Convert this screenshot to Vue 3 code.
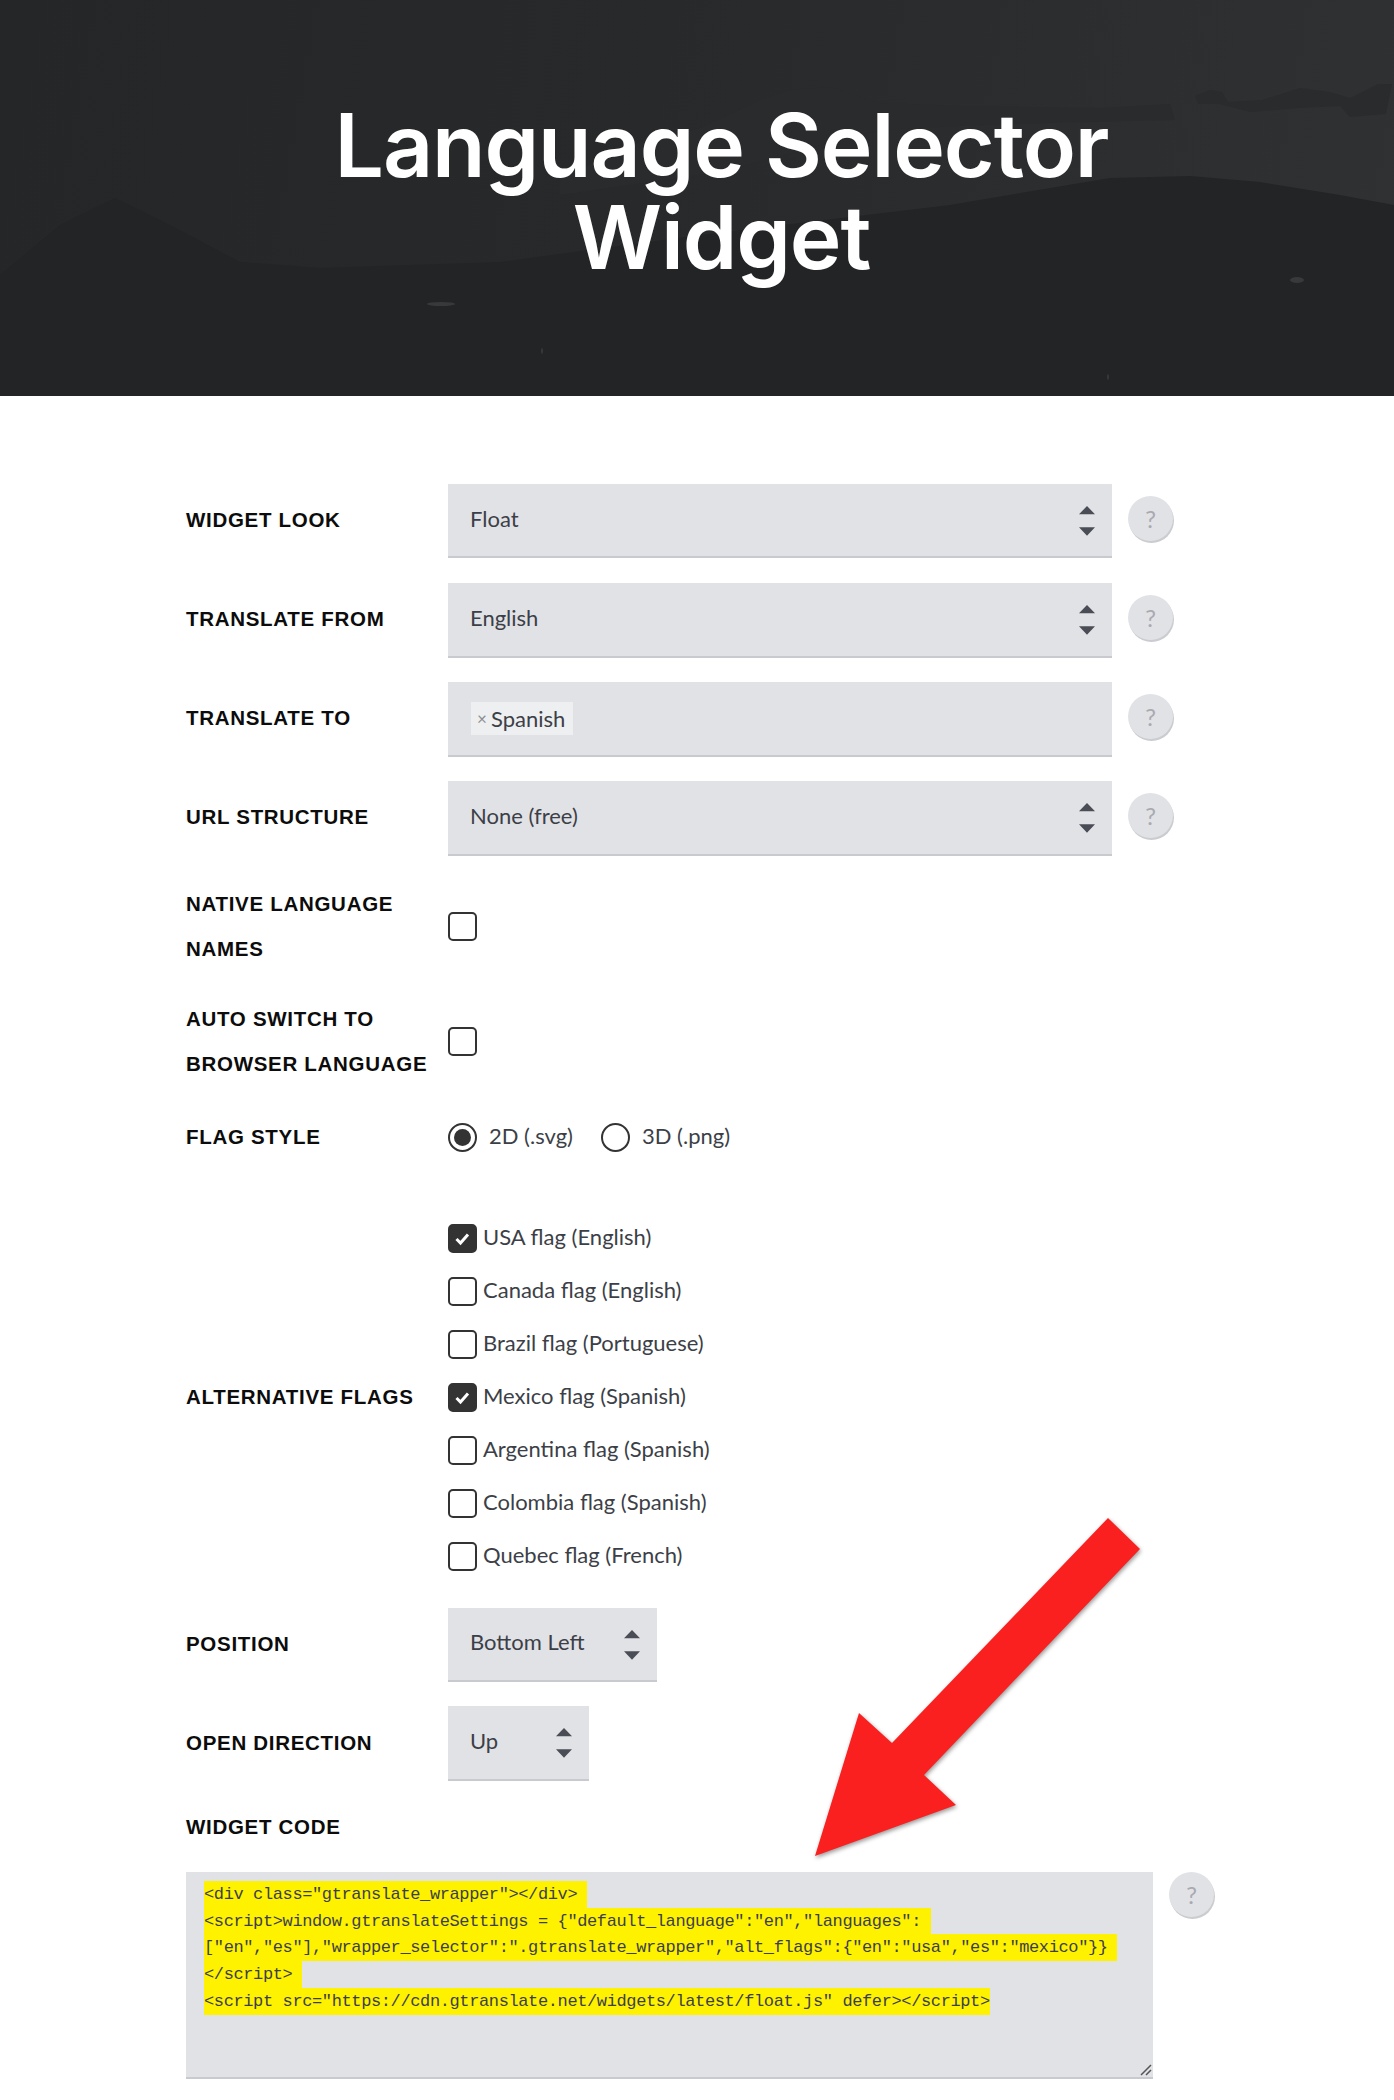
<script setup>
const selects = [
  { label: 'WIDGET LOOK', value: 'Float' },
  { label: 'TRANSLATE FROM', value: 'English' },
  { label: 'TRANSLATE TO', tag: 'Spanish' },
  { label: 'URL STRUCTURE', value: 'None (free)' },
]
const flags = [
  { text: 'USA flag (English)', on: true },
  { text: 'Canada flag (English)', on: false },
  { text: 'Brazil flag (Portuguese)', on: false },
  { text: 'Mexico flag (Spanish)', on: true },
  { text: 'Argentina flag (Spanish)', on: false },
  { text: 'Colombia flag (Spanish)', on: false },
  { text: 'Quebec flag (French)', on: false },
]
const codeLines = [
  '<div class="gtranslate_wrapper"></div>\u00a0',
  '<script>window.gtranslateSettings = {"default_language":"en","languages":\u00a0',
  '["en","es"],"wrapper_selector":".gtranslate_wrapper","alt_flags":{"en":"usa","es":"mexico"}}\u00a0',
  '<\/script>\u00a0',
  '<script src="https://cdn.gtranslate.net/widgets/latest/float.js" defer><\/script>',
]
</script>

<template>
  <div class="page">
    <header class="hero">
      <svg class="hero-bg" viewBox="0 0 1394 396" preserveAspectRatio="none" aria-hidden="true">
        <path class="ridge" d="M560 178L640 142L700 128L760 100L790 90L830 87L880 103L960 106L1100 108L1170 104L1175 120L1000 124L880 130L720 172L560 195Z" />
        <path class="trees" d="M1195 96L1210 90L1222 92L1228 102L1262 100L1300 88L1330 92L1350 98L1378 84L1392 84L1386 114L1350 117L1340 106L1300 108L1250 112L1220 104L1198 104Z" />
        <path class="front" d="M0 275L60 225L115 198L170 225L240 262L320 268L500 262L700 235L950 205L1110 178L1190 176L1260 182L1340 195L1394 205V396H0Z" />
        <ellipse class="speck" cx="441" cy="304" rx="14" ry="2" />
        <ellipse class="speck" cx="1297" cy="280" rx="7" ry="3" />
        <ellipse class="speck" cx="542" cy="351" rx="1" ry="3" />
        <ellipse class="speck" cx="1108" cy="377" rx="1" ry="3" />
      </svg>
      <h1 class="title">Language Selector<br />Widget</h1>
    </header>

    <main class="form">
      <div v-for="s in selects" :key="s.label" class="row select-row">
        <div class="label">{{ s.label }}</div>
        <div class="select full">
          <span v-if="s.tag" class="tag"><span class="tag-x">×</span>{{ s.tag }}</span>
          <span v-else>{{ s.value }}</span>
          <svg v-if="!s.tag" class="updown" viewBox="0 0 16 30" aria-hidden="true">
            <path d="M8 0L16 8.300H0ZM0 21.300H16L8 29.700Z" />
          </svg>
        </div>
        <div class="help">?</div>
      </div>

      <div class="row native-row">
        <div class="label">NATIVE LANGUAGE<br />NAMES</div>
        <span class="box"></span>
      </div>
      <div class="row auto-row">
        <div class="label">AUTO SWITCH TO<br />BROWSER LANGUAGE</div>
        <span class="box"></span>
      </div>

      <div class="row flag-row">
        <div class="label">FLAG STYLE</div>
        <div class="radios">
          <span class="radio on"></span><span class="radio-text">2D (.svg)</span>
          <span class="radio"></span><span class="radio-text">3D (.png)</span>
        </div>
      </div>

      <div class="row alt-row">
        <div class="label">ALTERNATIVE FLAGS</div>
        <div class="flag-list">
          <div v-for="f in flags" :key="f.text" class="flag-item">
            <span class="box" :class="{ checked: f.on }">
              <svg v-if="f.on" viewBox="0 0 29 29" aria-hidden="true"><path d="M8.500 15l4 4 7.500-8.500" /></svg>
            </span>
            <span>{{ f.text }}</span>
          </div>
        </div>
      </div>

      <div class="row pos-row">
        <div class="label">POSITION</div>
        <div class="select w-pos">
          <span>Bottom Left</span>
          <svg class="updown" viewBox="0 0 16 30" aria-hidden="true"><path d="M8 0L16 8.300H0ZM0 21.300H16L8 29.700Z" /></svg>
        </div>
      </div>
      <div class="row dir-row">
        <div class="label">OPEN DIRECTION</div>
        <div class="select w-dir">
          <span>Up</span>
          <svg class="updown" viewBox="0 0 16 30" aria-hidden="true"><path d="M8 0L16 8.300H0ZM0 21.300H16L8 29.700Z" /></svg>
        </div>
      </div>

      <div class="label code-label">WIDGET CODE</div>
      <div class="code-row">
        <div class="code">
          <div v-for="(line, i) in codeLines" :key="i" class="code-line"><span class="mark">{{ line }}</span></div>
          <svg class="grip" viewBox="0 0 12 12" aria-hidden="true"><path d="M1 11L11 1M6 11L11 6" /></svg>
        </div>
        <div class="help">?</div>
      </div>
    </main>

    <svg class="arrow" viewBox="0 0 340 350" aria-hidden="true">
      <polygon points="298,8 330,39 114,265 146,295 5,346 49,203 82,233" />
    </svg>
  </div>
</template>

<style scoped>
.page {
  position: relative;
  height: 2100px;
  overflow: hidden;
  background: #fff;
  font-family: Lato, "Liberation Sans", sans-serif;
  font-size: 22px;
  color: #3c3f47;
}
.hero {
  position: relative;
  height: 396px;
  box-sizing: border-box;
  padding: 99px 0 0 49px;
  background: linear-gradient(100deg, #252628 0%, #28292b 45%, #303133 100%);
}
.hero-bg {
  position: absolute;
  inset: 0;
  width: 100%;
  height: 100%;
}
.ridge { fill: #2a2b2d; }
.trees { fill: #2a2b2d; }
.front { fill: #232426; }
.speck { fill: #38393b; }
.title {
  position: relative;
  margin: 0;
  text-align: center;
  font-family: Inter, sans-serif;
  font-size: 87.500px;
  line-height: 92px;
  font-weight: 600;
  letter-spacing: -1.1px;
  color: #fff;
}
.form {
  padding: 87.600px 0 0 186px;
}
.row {
  display: flex;
  align-items: center;
}
.label {
  flex: 0 0 262px;
  font-family: "Liberation Sans", Arial, sans-serif;
  font-weight: 700;
  font-size: 20.500px;
  line-height: 45px;
  letter-spacing: 0.7px;
  color: #0c0c0c;
}
.row > .label { padding-bottom: 2px; }
.select-row { margin-bottom: 24.400px; align-items: flex-start; }
.select-row > .label { padding-bottom: 0; line-height: 71px; }
.select {
  position: relative;
  box-sizing: border-box;
  height: 74.900px;
  display: flex;
  align-items: center;
  padding: 0 0 4px 22px;
  background: #e1e2e6;
  border-bottom: 2px solid #c9cacf;
}
.full { width: 664px; }
.w-pos { width: 209px; }
.w-dir { width: 141px; }
.updown {
  position: absolute;
  right: 17px;
  top: 22px;
  width: 16px;
  height: 30px;
  fill: #4a4d55;
}
.tag {
  display: flex;
  align-items: center;
  height: 33px;
  width: 102px;
  box-sizing: border-box;
  padding-left: 6px;
  margin: 4px 0 0 1px;
  background: #eeeff0;
}
.tag-x {
  width: 14px;
  font-size: 17px;
  color: #8c8d92;
}
.help {
  width: 45px;
  height: 45px;
  margin: 12px 0 0 16px;
  border-radius: 50%;
  background: #e1e2e6;
  box-shadow: 1px 2px 0 #cbccd0;
  text-align: center;
  line-height: 45px;
  font-size: 24px;
  color: #a9aab0;
}
.native-row { margin-bottom: 22.900px; }
.auto-row { margin-bottom: 35.300px; }
.box {
  display: block;
  box-sizing: border-box;
  flex: none;
  width: 29px;
  height: 29px;
  border: 2px solid #333;
  border-radius: 5px;
  background: #fff;
}
.box svg {
  display: block;
  width: 29px;
  height: 29px;
  margin: -2px;
  fill: none;
  stroke: #fff;
  stroke-width: 3;
}
.box.checked { background: #333; }
.flag-row { height: 29px; margin-bottom: 71.600px; }
.radios {
  display: flex;
  align-items: center;
}
.radio {
  position: relative;
  box-sizing: border-box;
  width: 29px;
  height: 29px;
  border: 2px solid #333;
  border-radius: 50%;
}
.radio.on::after {
  content: "";
  position: absolute;
  inset: 4px;
  border-radius: 50%;
  background: #333;
}
.radio-text { margin: -3px 28px 0 12px; }
.alt-row { margin-bottom: 37px; }
.flag-list {
  display: flex;
  flex-direction: column;
  gap: 24px;
}
.flag-item {
  display: flex;
  align-items: center;
  gap: 7px;
  height: 29px;
}
.flag-item span:last-child { margin: -4px 0 0 -1px; }
.pos-row { margin-bottom: 24px; }
.dir-row { margin-bottom: 23px; }
.code-label { margin-bottom: 22.500px; }
.code-row {
  display: flex;
  align-items: flex-start;
}
.code {
  position: relative;
  box-sizing: border-box;
  width: 967px;
  height: 207px;
  padding: 9px 18px 0;
  background: #e1e2e6;
  border-bottom: 2px solid #c9cacf;
  font-family: "Liberation Mono", monospace;
  font-size: 17px;
  letter-spacing: -0.38px;
  color: #3c3f47;
}
.code-line { display: flex; height: 26.800px; }
.mark {
  display: block;
  height: 26.800px;
  line-height: 28.500px;
  white-space: pre;
  background: #fff200;
}
.grip {
  position: absolute;
  right: 1px;
  bottom: 1px;
  width: 12px;
  height: 12px;
  fill: none;
  stroke: #555;
  stroke-width: 1.5;
}
.code-row .help { margin-top: 0; }
.arrow {
  position: absolute;
  left: 810px;
  top: 1510px;
  width: 340px;
  height: 350px;
  fill: #fa2020;
  filter: drop-shadow(1px 2px 2px rgba(0, 0, 0, 0.4));
}
</style>
